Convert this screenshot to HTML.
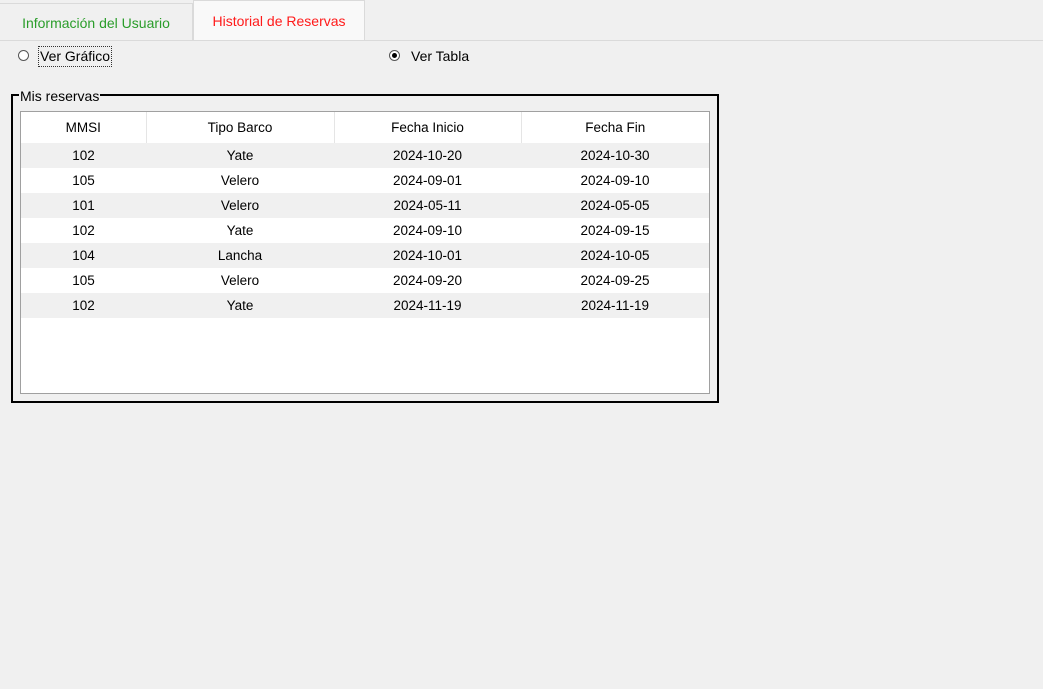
<!DOCTYPE html>
<html><head><meta charset="utf-8"><style>
body{margin:0;width:1043px;height:689px;background:#f0f0f0;font-family:"Liberation Sans",sans-serif;font-size:13.5px;color:#000;position:relative;overflow:hidden}
.a{position:absolute}
.tab{position:absolute;top:0;height:40px;box-sizing:border-box;line-height:42px;text-align:center;font-size:14px}
table{border-collapse:collapse;table-layout:fixed}
td{height:25px;text-align:center;padding:0;font-size:13.5px}
th{height:31px;font-weight:normal;text-align:center;padding:0;border-right:1px solid #e5e5e5;background:#fff}
tr.g td{background:#f0f0f0}
</style></head><body>
<div class="a" style="left:0;top:40px;width:1043px;height:1px;background:#dadada"></div>
<div class="tab" style="left:0;top:3px;height:37px;width:193px;background:#f0f0f0;border-right:1px solid #dadada;border-top:1px solid #dadada;color:#2a9d2a;line-height:38px">Información del Usuario</div>
<div class="tab" style="left:193px;width:172px;background:#f9f9f9;border:1px solid #dadada;border-bottom:none;color:#ff1a1a;line-height:40px">Historial de Reservas</div>
<div class="a" style="left:18px;top:50px;width:11px;height:11px;border-radius:50%;border:1px solid #555;background:#fff;box-sizing:border-box"></div>
<div class="a" style="left:38px;top:46px;border:1px dotted #333;padding:1px 1px;line-height:17px;font-size:14px">Ver Gráfico</div>
<div class="a" style="left:389px;top:50px;width:11px;height:11px;border-radius:50%;border:1px solid #555;background:#fff;box-sizing:border-box"><div style="position:absolute;left:2px;top:2px;width:5px;height:5px;border-radius:50%;background:#000"></div></div>
<div class="a" style="left:411px;top:48px;line-height:17px;font-size:14px">Ver Tabla</div>
<div class="a" style="left:11px;top:94px;width:708px;height:309px;border:2px solid #000;box-sizing:border-box"></div>
<div class="a" style="left:19px;top:88px;background:#f0f0f0;padding:0 1px;line-height:16px;font-size:14px">Mis reservas</div>
<div class="a" style="left:20px;top:111px;width:690px;height:283px;border:1px solid #a0a0a0;box-sizing:border-box;background:#fff">
<table style="width:688px">
<colgroup><col style="width:125px"><col style="width:188px"><col style="width:187px"><col style="width:188px"></colgroup>
<tr><th>MMSI</th><th>Tipo Barco</th><th>Fecha Inicio</th><th style="border-right:none">Fecha Fin</th></tr>
<tr class="g"><td>102</td><td>Yate</td><td>2024-10-20</td><td>2024-10-30</td></tr>
<tr><td>105</td><td>Velero</td><td>2024-09-01</td><td>2024-09-10</td></tr>
<tr class="g"><td>101</td><td>Velero</td><td>2024-05-11</td><td>2024-05-05</td></tr>
<tr><td>102</td><td>Yate</td><td>2024-09-10</td><td>2024-09-15</td></tr>
<tr class="g"><td>104</td><td>Lancha</td><td>2024-10-01</td><td>2024-10-05</td></tr>
<tr><td>105</td><td>Velero</td><td>2024-09-20</td><td>2024-09-25</td></tr>
<tr class="g"><td>102</td><td>Yate</td><td>2024-11-19</td><td>2024-11-19</td></tr>
</table></div>
</body></html>
